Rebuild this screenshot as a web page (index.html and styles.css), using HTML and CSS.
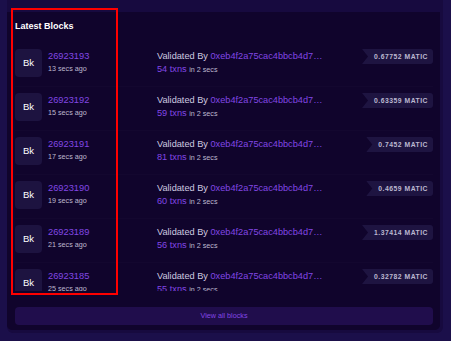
FILE: index.html
```html
<!DOCTYPE html>
<html lang="en">

<head>
  <meta charset="UTF-8">
  <meta name="viewport" content="width=device-width, initial-scale=1.0">
  <title>Latest Blocks</title>
  <link rel="stylesheet" href="styles.css">
</head>

<body>
  <div class="card">
    <div class="inner">
      <h2 class="title">Latest Blocks</h2>
      <ul class="block-list">
        <li class="row">
          <div class="block">
            <span class="bk">Bk</span>
            <div class="info">
              <a href="#" class="num">26923193</a>
              <span class="small">13 secs ago</span>
            </div>
          </div>
          <div class="validator">
            <div class="line">Validated By <a href="#">0xeb4f2a75cac4bbcb4d7…</a></div>
            <div class="line"><a href="#">54 txns</a> <span class="small">in 2 secs</span></div>
          </div>
          <span class="reward">0.67752 MATIC</span>
        </li>
        <li class="row">
          <div class="block">
            <span class="bk">Bk</span>
            <div class="info">
              <a href="#" class="num">26923192</a>
              <span class="small">15 secs ago</span>
            </div>
          </div>
          <div class="validator">
            <div class="line">Validated By <a href="#">0xeb4f2a75cac4bbcb4d7…</a></div>
            <div class="line"><a href="#">59 txns</a> <span class="small">in 2 secs</span></div>
          </div>
          <span class="reward">0.63359 MATIC</span>
        </li>
        <li class="row">
          <div class="block">
            <span class="bk">Bk</span>
            <div class="info">
              <a href="#" class="num">26923191</a>
              <span class="small">17 secs ago</span>
            </div>
          </div>
          <div class="validator">
            <div class="line">Validated By <a href="#">0xeb4f2a75cac4bbcb4d7…</a></div>
            <div class="line"><a href="#">81 txns</a> <span class="small">in 2 secs</span></div>
          </div>
          <span class="reward">0.7452 MATIC</span>
        </li>
        <li class="row">
          <div class="block">
            <span class="bk">Bk</span>
            <div class="info">
              <a href="#" class="num">26923190</a>
              <span class="small">19 secs ago</span>
            </div>
          </div>
          <div class="validator">
            <div class="line">Validated By <a href="#">0xeb4f2a75cac4bbcb4d7…</a></div>
            <div class="line"><a href="#">60 txns</a> <span class="small">in 2 secs</span></div>
          </div>
          <span class="reward">0.4659 MATIC</span>
        </li>
        <li class="row">
          <div class="block">
            <span class="bk">Bk</span>
            <div class="info">
              <a href="#" class="num">26923189</a>
              <span class="small">21 secs ago</span>
            </div>
          </div>
          <div class="validator">
            <div class="line">Validated By <a href="#">0xeb4f2a75cac4bbcb4d7…</a></div>
            <div class="line"><a href="#">56 txns</a> <span class="small">in 2 secs</span></div>
          </div>
          <span class="reward">1.37414 MATIC</span>
        </li>
        <li class="row">
          <div class="block">
            <span class="bk">Bk</span>
            <div class="info">
              <a href="#" class="num">26923185</a>
              <span class="small">25 secs ago</span>
            </div>
          </div>
          <div class="validator">
            <div class="line">Validated By <a href="#">0xeb4f2a75cac4bbcb4d7…</a></div>
            <div class="line"><a href="#">55 txns</a> <span class="small">in 2 secs</span></div>
          </div>
          <span class="reward">0.32782 MATIC</span>
        </li>
      </ul>
      <a href="#" class="view-all">View all blocks</a>
    </div>
  </div>

  <!-- highlight box -->
  <div class="highlight"></div>
</body>

</html>
```

FILE: styles.css
```css
* {
  margin: 0;
  padding: 0;
  box-sizing: border-box;
}

a {
  text-decoration: none;
  color: #8247e5;
}

li {
  list-style-type: none;
}

body {
  width: 451px;
  height: 341px;
  overflow: hidden;
  background-color: #1b0f4a;
  font-family: "Liberation Sans", Arial, sans-serif;
  color: #cfcbe0;
}

.card {
  width: 436px;
  height: 333px;
  margin-left: 7px;
  padding: 12px 3px 3px 0;
  background-color: #170a3f;
  border-radius: 0 0 6px 6px;
}

.inner {
  display: flex;
  flex-direction: column;
  height: 100%;
  padding: 0 7px 0 8px;
  background-color: #10042c;
  border-radius: 0 0 5px 5px;
}

.title {
  padding-top: 8px;
  height: 31px;
  font-size: 9px;
  line-height: 12px;
  font-weight: bold;
  color: #ffffff;
}

.block-list {
  height: 248px;
  overflow: hidden;
}

.row {
  display: flex;
  align-items: flex-start;
  height: 44px;
  padding-top: 6px;
  border-bottom: 1px solid rgba(255, 255, 255, 0.015);
}

.block {
  display: flex;
  width: 142px;
}

.bk {
  width: 27px;
  height: 28px;
  border-radius: 4px;
  background-color: #1d1340;
  color: #ffffff;
  font-size: 9.5px;
  line-height: 28px;
  text-align: center;
}

.info {
  display: flex;
  flex-direction: column;
  padding-left: 6px;
}

.num {
  font-size: 9.3px;
  line-height: 14px;
}

.small {
  font-size: 7.2px;
  line-height: 12px;
  color: #bdb9cf;
}

.validator {
  flex: 1;
}

.validator .line {
  font-size: 9.2px;
  line-height: 14px;
  white-space: nowrap;
}

.validator .line:last-child {
  line-height: 12px;
}

.reward {
  height: 15px;
  padding: 0 5px 0 12px;
  background-color: #1e1441;
  border-radius: 0 3px 3px 0;
  clip-path: polygon(0 0, 100% 0, 100% 100%, 0 100%, 6px 50%);
  font-size: 6.8px;
  font-weight: bold;
  letter-spacing: 0.5px;
  line-height: 15px;
  color: #bcb8d0;
}

.view-all {
  display: block;
  height: 18px;
  margin-top: 16px;
  border-radius: 4px;
  background-color: #200d4c;
  font-size: 7.2px;
  line-height: 18px;
  text-align: center;
}

.highlight {
  position: absolute;
  left: 11px;
  top: 8px;
  width: 107px;
  height: 287px;
  border: 2px solid #ff0000;
}
```
